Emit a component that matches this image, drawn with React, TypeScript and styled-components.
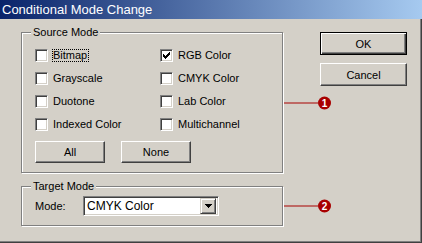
import * as React from 'react';
import styled, {createGlobalStyle} from 'styled-components';

const face = '#d4d0c8';
const shadow = '#808080';
const dark = '#404040';
const callRed = '#a80000';

const GlobalStyle = createGlobalStyle`
    html, body {
        margin: 0;
        padding: 0;
        background: ${face};
    }
`;

const Window = styled.div`
    width: 422px;
    height: 243px;
    display: flex;
    flex-direction: column;
    background: ${face};
    font-family: "Liberation Sans", Arial, sans-serif;
    font-size: 11px;
    color: #000;
    overflow: hidden;
    box-sizing: border-box;
`;

const TitleBar = styled.div`
    flex: none;
    height: 19px;
    padding-left: 2px;
    background: linear-gradient(to right, #0a246a, #a6caf0);
    color: #fff;
    font-size: 13px;
    line-height: 19px;
    white-space: nowrap;
`;

const Body = styled.div`
    flex: 1;
    display: flex;
    padding: 13px 0 0 21px;
    border-right: 1px solid ${dark};
    border-bottom: 1px solid ${dark};
    box-shadow: inset -1px -1px 0 ${shadow};
`;

const Groups = styled.div`
    width: 262px;
    display: flex;
    flex-direction: column;
    gap: 13px;
`;

const GroupBox = styled.div<{$pb: number}>`
    position: relative;
    border: 1px solid ${shadow};
    box-shadow: inset 1px 1px 0 #fff, 1px 1px 0 #fff;
    padding-bottom: ${(p) => p.$pb}px;
`;

const Legend = styled.div`
    display: table;
    margin: -7px 0 0 9px;
    padding: 0 2px;
    background: ${face};
    line-height: 13px;
`;

const CheckGrid = styled.div`
    display: grid;
    grid-template-columns: 125px 110px;
    grid-auto-rows: 23px;
    align-items: center;
    margin: 5px 0 0 13px;
`;

const CheckRow = styled.label`
    display: flex;
    align-items: center;
`;

const Box = styled.span`
    flex: none;
    position: relative;
    width: 13px;
    height: 13px;
    box-sizing: border-box;
    margin-right: 4px;
    background: #fff;
    border: 1px solid;
    border-color: ${shadow} #fff #fff ${shadow};
    box-shadow: inset 1px 1px 0 ${dark}, inset -1px -1px 0 ${face};
`;

const Tick = styled.svg`
    position: absolute;
    left: -1px;
    top: -1px;
`;

const CheckText = styled.span<{$focus?: boolean}>`
    line-height: 11px;
    padding-right: 1px;
    border: 1px dotted ${(p) => (p.$focus ? '#000' : 'transparent')};
    white-space: nowrap;
`;

const ButtonRow = styled.div`
    display: flex;
    gap: 16px;
    margin: 5px 0 0 13px;
`;

const Button = styled.button<{$w: number; $h: number; $default?: boolean}>`
    width: ${(p) => p.$w}px;
    height: ${(p) => p.$h}px;
    box-sizing: border-box;
    padding: 0;
    background: ${face};
    font-family: inherit;
    font-size: 11px;
    color: #000;
    border: 1px solid;
    border-color: ${(p) => (p.$default ? '#000' : `#fff ${dark} ${dark} #fff`)};
    box-shadow: ${(p) =>
        p.$default
            ? `inset 1px 1px 0 #fff, inset -1px -1px 0 ${dark}, inset -2px -2px 0 ${shadow}`
            : `inset -1px -1px 0 ${shadow}`};
`;

const ModeRow = styled.div`
    display: flex;
    align-items: center;
    margin: 3px 0 0 13px;
`;

const ModeLabel = styled.span`
    width: 48px;
`;

const Select = styled.div`
    width: 136px;
    height: 20px;
    box-sizing: border-box;
    display: flex;
    align-items: center;
    background: #fff;
    border: 1px solid;
    border-color: ${shadow} #fff #fff ${shadow};
    box-shadow: inset 1px 1px 0 ${dark}, inset -1px -1px 0 ${face};
    padding: 2px 2px 2px 3px;
    font-size: 12px;
`;

const SelectValue = styled.span`
    flex: 1;
`;

const DropButton = styled.span`
    width: 16px;
    height: 16px;
    box-sizing: border-box;
    display: flex;
    align-items: center;
    justify-content: center;
    background: ${face};
    border: 1px solid;
    border-color: ${face} ${dark} ${dark} ${face};
    box-shadow: inset 1px 1px 0 #fff, inset -1px -1px 0 ${shadow};
`;

const Side = styled.div`
    margin-left: 37px;
    display: flex;
    flex-direction: column;
    gap: 8px;
`;

const Callout = styled.div`
    position: absolute;
    left: calc(100% + 2px);
    top: 50%;
    transform: translateY(-50%);
    display: flex;
    align-items: center;
`;

const CallLine = styled.span`
    width: 34px;
    height: 1px;
    background: ${callRed};
`;

const Badge = styled.span`
    width: 13px;
    height: 13px;
    border-radius: 50%;
    background: ${callRed};
    color: #fff;
    font-weight: bold;
    font-size: 10px;
    line-height: 13px;
    text-align: center;
`;

const Check: React.FC<{label: string; checked?: boolean; focus?: boolean}> = ({label, checked, focus}) => (
    <CheckRow>
        <Box>
            {checked && (
                <Tick width="13" height="13" viewBox="0 0 13 13" shapeRendering="crispEdges">
                    <path d="M3 5h1v3h-1zM4 6h1v3h-1zM5 7h1v3h-1zM6 6h1v3h-1zM7 5h1v3h-1zM8 4h1v3h-1zM9 3h1v3h-1z" fill="#000" />
                </Tick>
            )}
        </Box>
        <CheckText $focus={focus}>{label}</CheckText>
    </CheckRow>
);

const modes = [
    {label: 'Bitmap', focus: true},
    {label: 'RGB Color', checked: true},
    {label: 'Grayscale'},
    {label: 'CMYK Color'},
    {label: 'Duotone'},
    {label: 'Lab Color'},
    {label: 'Indexed Color'},
    {label: 'Multichannel'},
];

export default function App() {
    return (
        <>
            <GlobalStyle />
            <Window>
                <TitleBar>Conditional Mode Change</TitleBar>
                <Body>
                    <Groups>
                        <GroupBox $pb={9}>
                            <Legend>Source Mode</Legend>
                            <CheckGrid>
                                {modes.map((m) => (
                                    <Check key={m.label} label={m.label} checked={m.checked} focus={m.focus} />
                                ))}
                            </CheckGrid>
                            <ButtonRow>
                                <Button $w={70} $h={22}>All</Button>
                                <Button $w={70} $h={22}>None</Button>
                            </ButtonRow>
                            <Callout>
                                <CallLine />
                                <Badge>1</Badge>
                            </Callout>
                        </GroupBox>
                        <GroupBox $pb={9}>
                            <Legend>Target Mode</Legend>
                            <ModeRow>
                                <ModeLabel>Mode:</ModeLabel>
                                <Select>
                                    <SelectValue>CMYK Color</SelectValue>
                                    <DropButton>
                                        <svg width="7" height="4" viewBox="0 0 7 4" shapeRendering="crispEdges">
                                            <path d="M0 0h7v1h-7zM1 1h5v1h-5zM2 2h3v1h-3zM3 3h1v1h-1z" fill="#000" />
                                        </svg>
                                    </DropButton>
                                </Select>
                            </ModeRow>
                            <Callout>
                                <CallLine />
                                <Badge>2</Badge>
                            </Callout>
                        </GroupBox>
                    </Groups>
                    <Side>
                        <Button $w={87} $h={23} $default>OK</Button>
                        <Button $w={87} $h={23}>Cancel</Button>
                    </Side>
                </Body>
            </Window>
        </>
    );
}
